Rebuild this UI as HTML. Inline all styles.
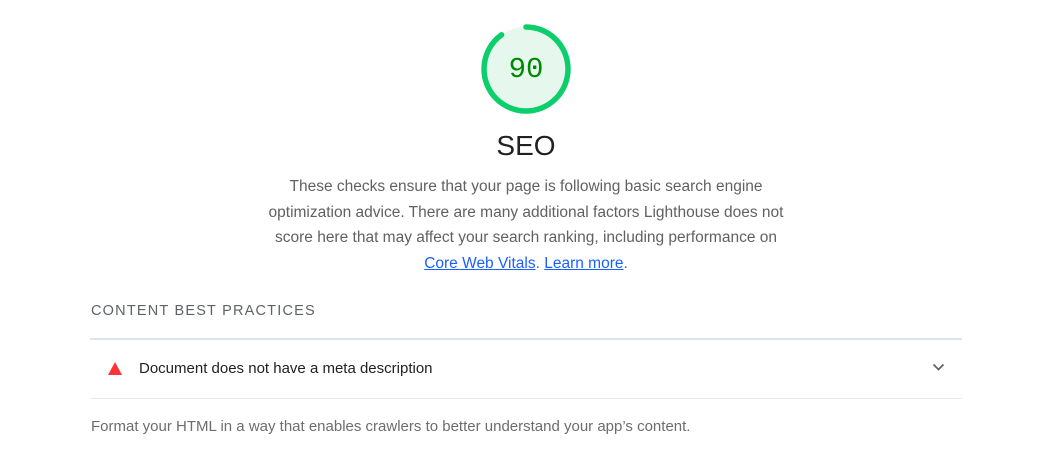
<!DOCTYPE html>
<html><head><style>
body{margin:0;width:1047px;height:465px;background:#fff;font-family:"Liberation Sans",sans-serif;position:relative;overflow:hidden}
.a{position:absolute}
.desc{left:263px;width:526px;top:174px;text-align:center;font-size:15.5px;line-height:25.5px;color:#616161}
.desc a{color:#1a5fff;text-decoration:underline}
</style></head><body>
<svg class="a" style="left:480px;top:23px" width="92" height="92" viewBox="0 0 92 92">
<circle cx="46" cy="46" r="42" fill="#e6f8ee"/>
<circle cx="46" cy="46" r="42" fill="none" stroke="#0cce6b" stroke-width="5.5" stroke-dasharray="237.5 263.9" transform="rotate(-90 46 46)" stroke-linecap="round"/>
</svg>
<div class="a" style="left:480px;width:92px;top:53px;text-align:center;font-family:'Liberation Mono',monospace;font-size:29px;color:#008800">90</div>
<div class="a" style="left:426px;width:200px;top:130px;text-align:center;font-size:28px;color:#212121">SEO</div>
<div class="a desc">These checks ensure that your page is following basic search engine optimization advice. There are many additional factors Lighthouse does not score here that may affect your search ranking, including performance on <a>Core Web Vitals</a>. <a>Learn more</a>.</div>
<div class="a" style="left:91px;top:303px;font-size:14.5px;letter-spacing:1.2px;color:#5f6368">CONTENT BEST PRACTICES</div>
<div class="a" style="left:90px;width:872px;top:338px;height:2px;background:#dbe4f7"></div>
<svg class="a" style="left:108px;top:362px" width="14" height="13"><polygon points="7,0 14,13 0,13" fill="#ff3333"/></svg>
<div class="a" style="left:139px;top:360px;font-size:15px;color:#212121">Document does not have a meta description</div>
<svg class="a" style="left:932px;top:363px" width="13" height="9"><path d="M1.5 1.5 L6.5 6.5 L11.5 1.5" fill="none" stroke="#5f6368" stroke-width="1.8"/></svg>
<div class="a" style="left:90px;width:872px;top:398px;height:1px;background:#ebebeb"></div>
<div class="a" style="left:91px;top:418px;font-size:15px;color:#6d6d6d">Format your HTML in a way that enables crawlers to better understand your app’s content.</div>
</body></html>
